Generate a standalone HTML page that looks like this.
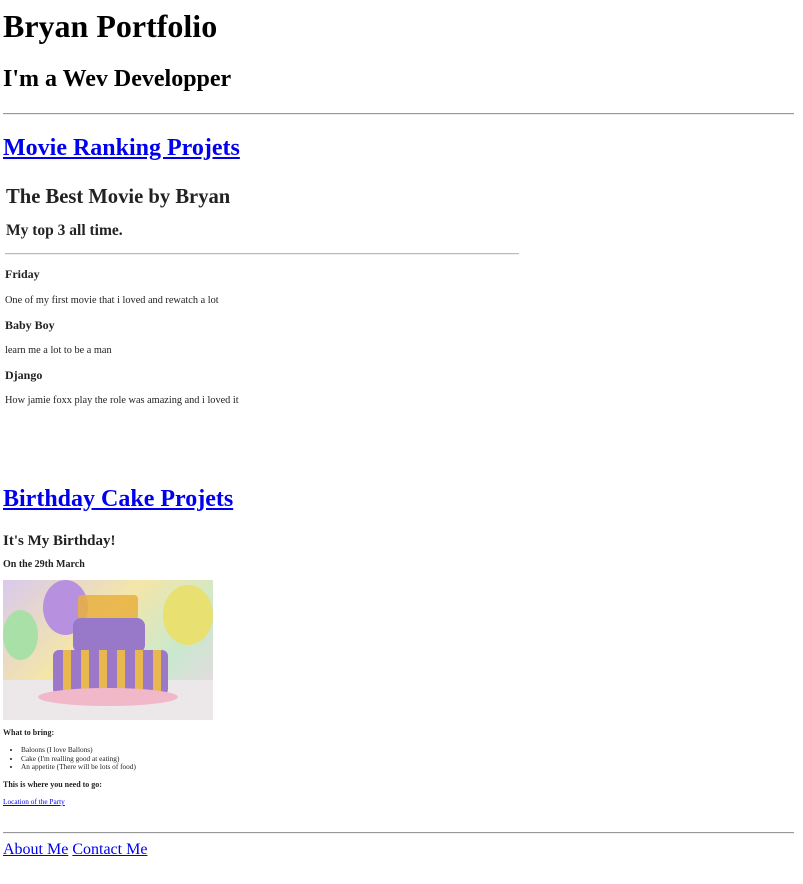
<!DOCTYPE html>
<html><head><meta charset="utf-8"><style>
body{margin:0;width:803px;height:884px;position:relative;font-family:"Liberation Serif",serif;color:#000;background:#fff;overflow:hidden}
.a{position:absolute;white-space:nowrap;line-height:1}
b,.b{font-weight:bold}
a{color:#0000ee;text-decoration:underline}
.hr{position:absolute;height:0;border-top:1px solid #999;border-bottom:1px solid #eee}
ul{margin:0;padding-left:18px}
</style></head><body>
<div class="a b" style="left:3px;top:10px;font-size:32px">Bryan Portfolio</div>
<div class="a b" style="left:3px;top:67px;font-size:24px">I'm a Wev Developper</div>
<div class="hr" style="left:3px;width:791px;top:113px"></div>
<div class="a b" style="left:3px;top:136px;font-size:24px"><a href="#">Movie Ranking Projets</a></div>
<div class="a b" style="left:6px;top:187px;font-size:20.6px;color:#222">The Best Movie by Bryan</div>
<div class="a b" style="left:6px;top:223px;font-size:15.5px;color:#222">My top 3 all time.</div>
<div class="hr" style="left:5px;width:514px;top:253px;border-top-color:#bbb"></div>
<div class="a b" style="left:5px;top:268px;font-size:12px;color:#222">Friday</div>
<div class="a" style="left:5px;top:296px;font-size:10.3px;color:#222">One of my first movie that i loved and rewatch a lot</div>
<div class="a b" style="left:5px;top:319px;font-size:12px;color:#222">Baby Boy</div>
<div class="a" style="left:5px;top:346px;font-size:10.3px;color:#222">learn me a lot to be a man</div>
<div class="a b" style="left:5px;top:369px;font-size:12px;color:#222">Django</div>
<div class="a" style="left:5px;top:396px;font-size:10.3px;color:#222">How jamie foxx play the role was amazing and i loved it</div>
<div class="a b" style="left:3px;top:487px;font-size:24px"><a href="#">Birthday Cake Projets</a></div>
<div class="a b" style="left:3px;top:534px;font-size:15px;color:#222">It's My Birthday!</div>
<div class="a b" style="left:3px;top:560px;font-size:10px;color:#222">On the 29th March</div>
<div style="position:absolute;left:3px;top:580px;width:210px;height:140px;overflow:hidden;background:linear-gradient(135deg,#d9c9ee,#f4e6a8 40%,#c9e8cf 70%,#f2d4e4)">
 <div style="position:absolute;left:40px;top:0;width:45px;height:55px;border-radius:50%;background:#b890e0"></div>
 <div style="position:absolute;left:160px;top:5px;width:50px;height:60px;border-radius:50%;background:#e8e070"></div>
 <div style="position:absolute;left:0;top:30px;width:35px;height:50px;border-radius:50%;background:#a8e0a8"></div>
 <div style="position:absolute;left:0;top:100px;width:210px;height:40px;background:#ece8ea"></div>
 <div style="position:absolute;left:75px;top:15px;width:60px;height:25px;background:#e8b040;border-radius:4px;opacity:.85"></div>
 <div style="position:absolute;left:70px;top:38px;width:72px;height:35px;background:#9878c8;border-radius:8px"></div>
 <div style="position:absolute;left:50px;top:70px;width:115px;height:45px;background:repeating-linear-gradient(90deg,#9c78c8 0 10px,#e8b850 10px 18px);border-radius:6px"></div>
 <div style="position:absolute;left:35px;top:108px;width:140px;height:18px;background:#f0b8c8;border-radius:50%"></div>
</div>
<div class="a b" style="left:3px;top:729px;font-size:8px;color:#222">What to bring:</div>
<div style="position:absolute;left:3px;top:746px;font-size:7.3px;line-height:8.5px;color:#222"><ul><li>Baloons (I love Ballons)</li><li>Cake (I'm realling good at eating)</li><li>An appetite (There will be lots of food)</li></ul></div>
<div class="a b" style="left:3px;top:781px;font-size:8px;color:#222">This is where you need to go:</div>
<div class="a" style="left:3px;top:798px;font-size:7.3px"><a href="#">Location of the Party</a></div>
<div class="hr" style="left:3px;width:791px;top:832px"></div>
<div class="a" style="left:3px;top:842px;font-size:16px"><a href="#">About Me</a> <a href="#">Contact Me</a></div>
</body></html>
